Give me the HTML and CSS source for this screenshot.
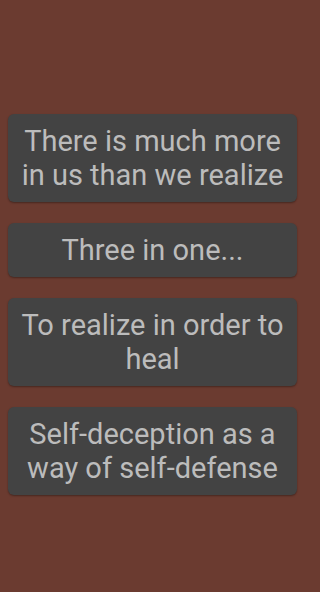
FILE: index.html
```html
<!DOCTYPE html>
<html>
<head>
<meta charset="utf-8">
<link rel="stylesheet" href="styles.css">
</head>
<body>
<main class="list">
  <div class="card">There is much more in us than we realize</div>
  <div class="card">Three in one...</div>
  <div class="card">To realize in order to heal</div>
  <div class="card">Self-deception as a way of self-defense</div>
</main>
</body>
</html>
```
FILE: styles.css
```css
html, body {
  margin: 0;
  padding: 0;
  background: #6b3b30;
  height: 100%;
}
.list {
  box-sizing: border-box;
  width: 307px;
  display: flex;
  flex-direction: column;
  gap: 21px;
  padding: 114px 10px 0 8px;
}
.card {
  background: #434343;
  border-radius: 6px;
  box-shadow: 0 1px 2px rgba(0,0,0,0.35);
  color: #bcbcbc;
  font-family: Roboto, "Noto Sans", sans-serif;
  font-size: 29px;
  line-height: 34px;
  text-align: center;
  padding: 10px 6px;
}
```
